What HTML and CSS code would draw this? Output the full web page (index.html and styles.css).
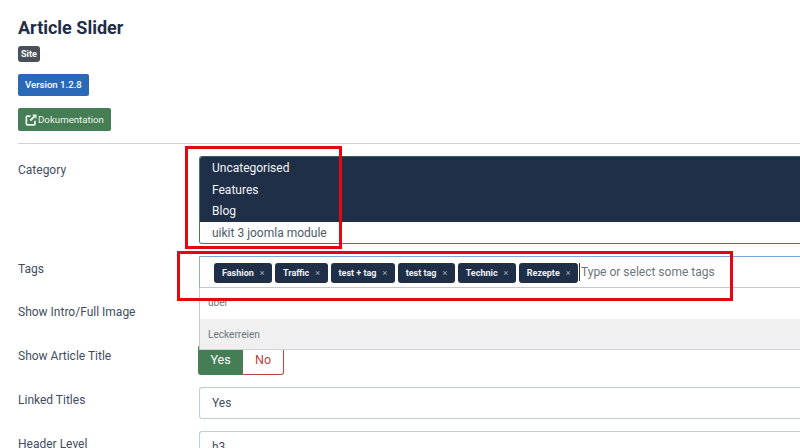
FILE: index.html
```html
<!DOCTYPE html>
<html lang="en">
<head>
<meta charset="utf-8">
<title>Article Slider</title>
<link rel="stylesheet" href="styles.css">
</head>
<body>
<main class="page">
  <header class="head">
    <h1 class="title">Article Slider</h1>
    <div><span class="badge badge-site">Site</span></div>
    <div><span class="badge badge-version">Version 1.2.8</span></div>
    <div>
      <a class="badge badge-doc">
        <svg class="doc-icon" viewBox="0 0 14 14" width="12" height="12" aria-hidden="true">
          <path d="M6.5 2.6H2.6a1 1 0 0 0-1 1v8a1 1 0 0 0 1 1h8a1 1 0 0 0 1-1V8" fill="none" stroke="currentColor" stroke-width="2"/>
          <path d="M8.2.6h5.2v5.2l-1.9-1.9-4.4 4.6-1.8-1.8 4.6-4.4z" fill="currentColor"/>
        </svg>Dokumentation
      </a>
    </div>
  </header>
  <hr class="rule">
  <form class="form">
    <div class="row row-category">
      <label class="label">Category</label>
      <div class="multi">
        <div class="opt opt-on">Uncategorised</div>
        <div class="opt opt-on">Features</div>
        <div class="opt opt-on">Blog</div>
        <div class="opt opt-off">uikit 3 joomla module</div>
      </div>
    </div>
    <div class="row row-tags">
      <label class="label">Tags</label>
      <div class="tagbox">
        <span class="tag">Fashion <i>×</i></span>
        <span class="tag">Traffic <i>×</i></span>
        <span class="tag">test + tag <i>×</i></span>
        <span class="tag">test tag <i>×</i></span>
        <span class="tag">Technic <i>×</i></span>
        <span class="tag">Rezepte <i>×</i></span>
        <span class="placeholder">Type or select some tags</span>
        <div class="drop">
          <div class="drop-item">über</div>
          <div class="drop-item drop-hover">Leckerreien</div>
        </div>
      </div>
    </div>
    <div class="row row-intro">
      <label class="label">Show Intro/Full Image</label>
    </div>
    <div class="row row-switch">
      <label class="label">Show Article Title</label>
      <div class="switch"><span class="sw sw-yes">Yes</span><span class="sw sw-no">No</span></div>
    </div>
    <div class="row row-select">
      <label class="label">Linked Titles</label>
      <div class="select">Yes</div>
    </div>
    <div class="row row-select">
      <label class="label">Header Level</label>
      <div class="select">h3</div>
    </div>
  </form>
</main>
<div class="mark mark-category"></div>
<div class="mark mark-tags"></div>
</body>
</html>
```
FILE: styles.css
```css
* { box-sizing: border-box; }
html, body { margin: 0; height: 448px; overflow: hidden; background: #fff; }
body { font-family: Roboto, "Liberation Sans", sans-serif; color: #22304a; position: relative; }
.page { padding: 17px 0 0 18px; width: 800px; }
.head { display: flex; flex-direction: column; align-items: flex-start; }
.title { margin: 0; font-size: 18px; line-height: 21px; font-weight: 700; color: #1f2d47; }
.badge { display: inline-flex; align-items: center; border-radius: 2px; color: #fff; font-size: 9.5px; font-weight: 500; }
.badge-site { margin-top: 8px; height: 16px; padding: 0 3px; background: #495057; font-weight: 700; font-size: 9px; border-radius: 3px; }
.badge-version { margin-top: 12px; height: 22px; padding: 0 7px; background: #2a69b8; font-size: 9.6px; }
.badge-doc { margin-top: 12px; height: 23px; padding: 0 7px; background: #457d54; color: #eef5ef; font-weight: 400; font-size: 9.7px; }
.head > div { line-height: 0; }
.doc-icon { margin-right: 1px; flex: none; }
.rule { margin: 12px 0 0 0; border: 0; border-top: 1px solid #cfd2d6; }
.form { display: flex; flex-direction: column; }
.row { display: grid; grid-template-columns: 181px 1fr; align-items: start; }
.label { font-size: 12px; line-height: 16px; color: #3f4d63; padding-top: 5px; }
.row-category { margin-top: 12px; height: 88px; }
.row-category .label { padding-top: 6px; }
.multi { height: 88px; border: 1px solid #457d54; border-top-color: #3a5a5c; border-right: 0; border-radius: 3px 0 0 3px; overflow: hidden; font-size: 12px; }
.opt { height: 21.5px; line-height: 23px; padding-left: 12px; }
.opt-on { background: #1f2f48; color: #f2f4f7; }
.opt-off { background: #fff; color: #4e5a68; height: 23px; }
.row-tags { margin-top: 12px; height: 32px; }
.tagbox { position: relative; height: 32px; display: flex; align-items: flex-start; padding: 6px 0 0 14px; gap: 3px; border: 1px solid #7ba6d8; border-right: 0; border-bottom-color: #c4c8cc; border-left-color: #86aedc; background: #fff; }
.tag { display: inline-flex; align-items: center; gap: 6px; height: 20px; padding: 0 7.4px 0 8px; background: #1f2f48; color: #eef1f5; border-radius: 3px; font-size: 9px; font-weight: 700; white-space: nowrap; }
.tag i { font-style: normal; font-weight: 400; font-size: 9px; color: #a4adba; }
.placeholder { font-size: 12px; line-height: 18px; margin-left: -2px; padding-left: 1px; border-left: 1px solid #333; color: #6c757d; white-space: nowrap; }
.drop { position: absolute; top: 31px; left: -1px; width: 602px; height: 62px; background: #fff; border-left: 1px solid #c4c8cc; border-bottom: 1px solid #cfd2d6; font-size: 10.1px; color: #6c757d; z-index: 2; }
.drop-item { height: 31px; line-height: 31px; padding-left: 8px; }
.drop-item:first-child { line-height: 30px; }
.drop-hover { background: #f0f0f0; height: 30px; }
.row-intro { margin-top: 12px; height: 32px; }
.row-intro .label { padding-top: 4px; }
.row-switch { margin-top: 13px; height: 30px; }
.row-switch .label { padding-top: 3px; }
.switch { display: flex; margin-left: -1px; font-size: 12.5px; height: 30px; }
.sw { width: 45px; display: flex; align-items: center; justify-content: center; padding-bottom: 2px; }
.sw-yes { background: #457d54; color: #fff; border-radius: 3px 0 0 3px; }
.sw-no { width: 41px; color: #b8443f; border: 1px solid #b8443f; border-left: 0; border-radius: 0 3px 3px 0; }
.row-select { margin-top: 12px; height: 32px; }
.row-select .label { padding-top: 5px; }
.select { height: 32px; line-height: 30px; padding-left: 12px; font-size: 12px; color: #3f4d63; border: 1px solid #c2ccd8; border-right: 0; border-radius: 3px 0 0 3px; }
.mark { position: absolute; border: 3px solid #e30613; z-index: 5; pointer-events: none; }
.mark-category { left: 185px; top: 146px; width: 157px; height: 103px; }
.mark-tags { left: 177px; top: 251px; width: 556px; height: 50px; }
```
